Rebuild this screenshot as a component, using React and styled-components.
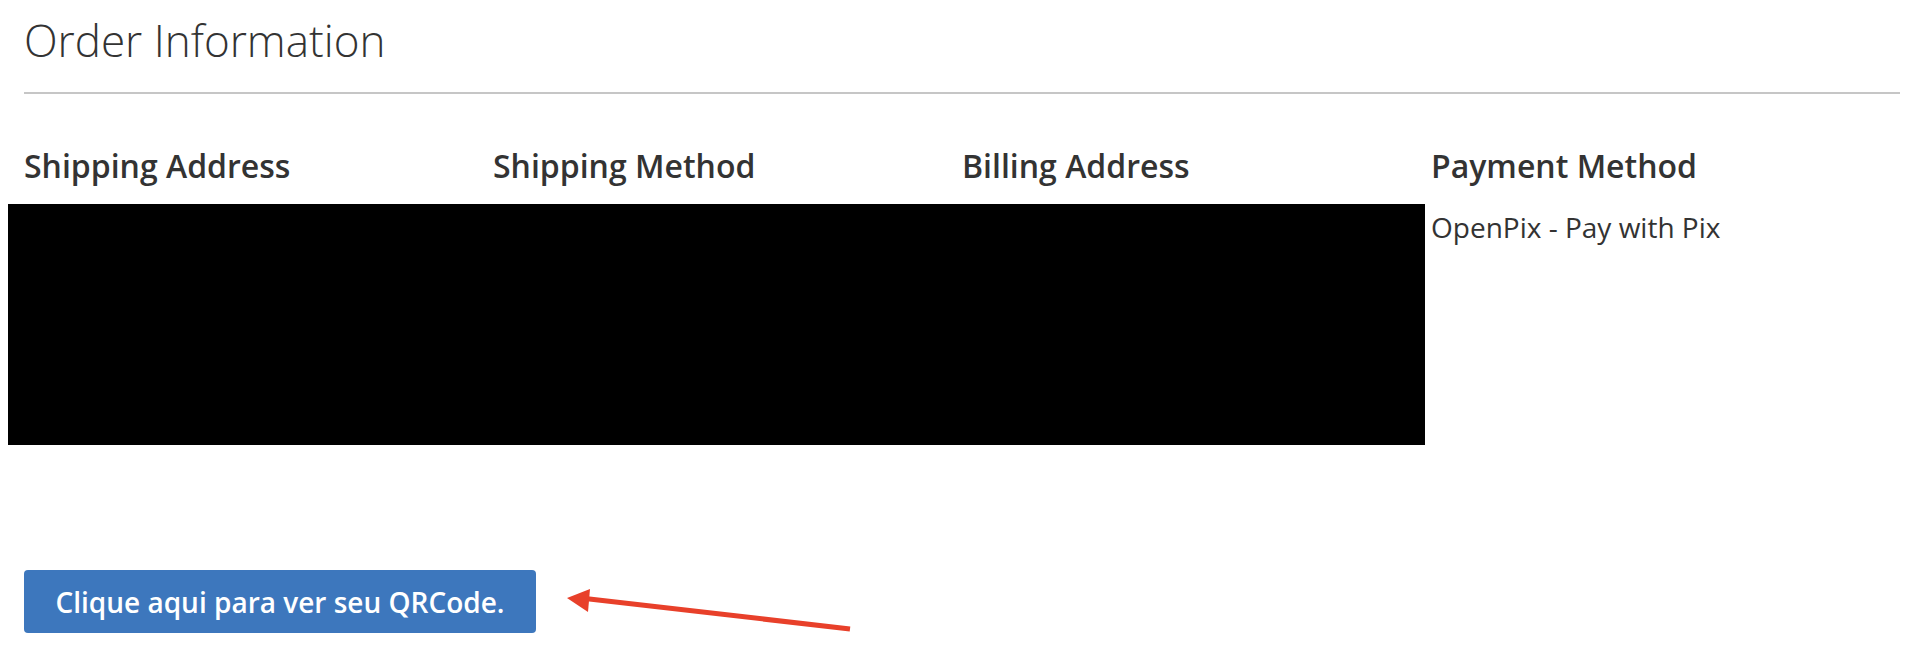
import React from "react";
import styled, { createGlobalStyle } from "styled-components";

const Global = createGlobalStyle`
  html, body { margin: 0; padding: 0; background: #fff; }
  body { font-family: "Open Sans", "Noto Sans", sans-serif; color: #333; }
`;

const Page = styled.div`
  width: 1924px;
  height: 670px;
  padding: 0 24px 0 24px;
  box-sizing: border-box;
  position: relative;
  overflow: hidden;
`;

const TitleBar = styled.div`
  border-bottom: 2px solid #c6c6c6;
  padding-top: 8px;
  height: 94px;
  box-sizing: border-box;
`;

const Title = styled.h1`
  margin: 0;
  font-size: 44px;
  font-weight: 300;
  line-height: 64px;
  color: #333;
`;

const Columns = styled.div`
  display: grid;
  grid-template-columns: repeat(4, 469px);
  margin-top: 50px;
  position: relative;
`;

const Column = styled.div``;

const Heading = styled.h2`
  margin: 0;
  font-size: 32px;
  font-weight: 600;
  line-height: 44px;
  color: #333;
`;

const Body = styled.div`
  margin-top: 16px;
  font-size: 28px;
  line-height: 46px;
  height: 241px;
  color: #333;
`;

const Redaction = styled.div`
  position: absolute;
  left: -16px;
  top: 60px;
  width: 1417px;
  height: 241px;
  background: #000;
`;

const Actions = styled.div`
  display: flex;
  align-items: center;
  margin-top: 125px;
  position: relative;
`;

const Button = styled.button`
  width: 512px;
  height: 63px;
  border: none;
  border-radius: 4px;
  background: #3d77bd;
  color: #fff;
  font-family: "Open Sans", sans-serif;
  font-weight: 600;
  font-size: 28px;
  cursor: pointer;
`;

const Arrow = styled.svg`
  position: absolute;
  left: 516px;
  top: 0;
  overflow: visible;
`;

export default function App() {
  return (
    <>
      <Global />
      <Page>
        <TitleBar>
          <Title>Order Information</Title>
        </TitleBar>
        <Columns>
          <Column><Heading>Shipping Address</Heading><Body /></Column>
          <Column><Heading>Shipping Method</Heading><Body /></Column>
          <Column><Heading>Billing Address</Heading><Body /></Column>
          <Column>
            <Heading>Payment Method</Heading>
            <Body>OpenPix - Pay with Pix</Body>
          </Column>
          <Redaction />
        </Columns>
        <Actions>
          <Button>Clique aqui para ver seu QRCode.</Button>
          <Arrow width="320" height="63" viewBox="0 0 320 63">
            <line x1="45" y1="28.5" x2="310" y2="59" stroke="#e8402a" strokeWidth="5" />
            <polygon points="27,28 50,19 48,42" fill="#e8402a" />
          </Arrow>
        </Actions>
      </Page>
    </>
  );
}
